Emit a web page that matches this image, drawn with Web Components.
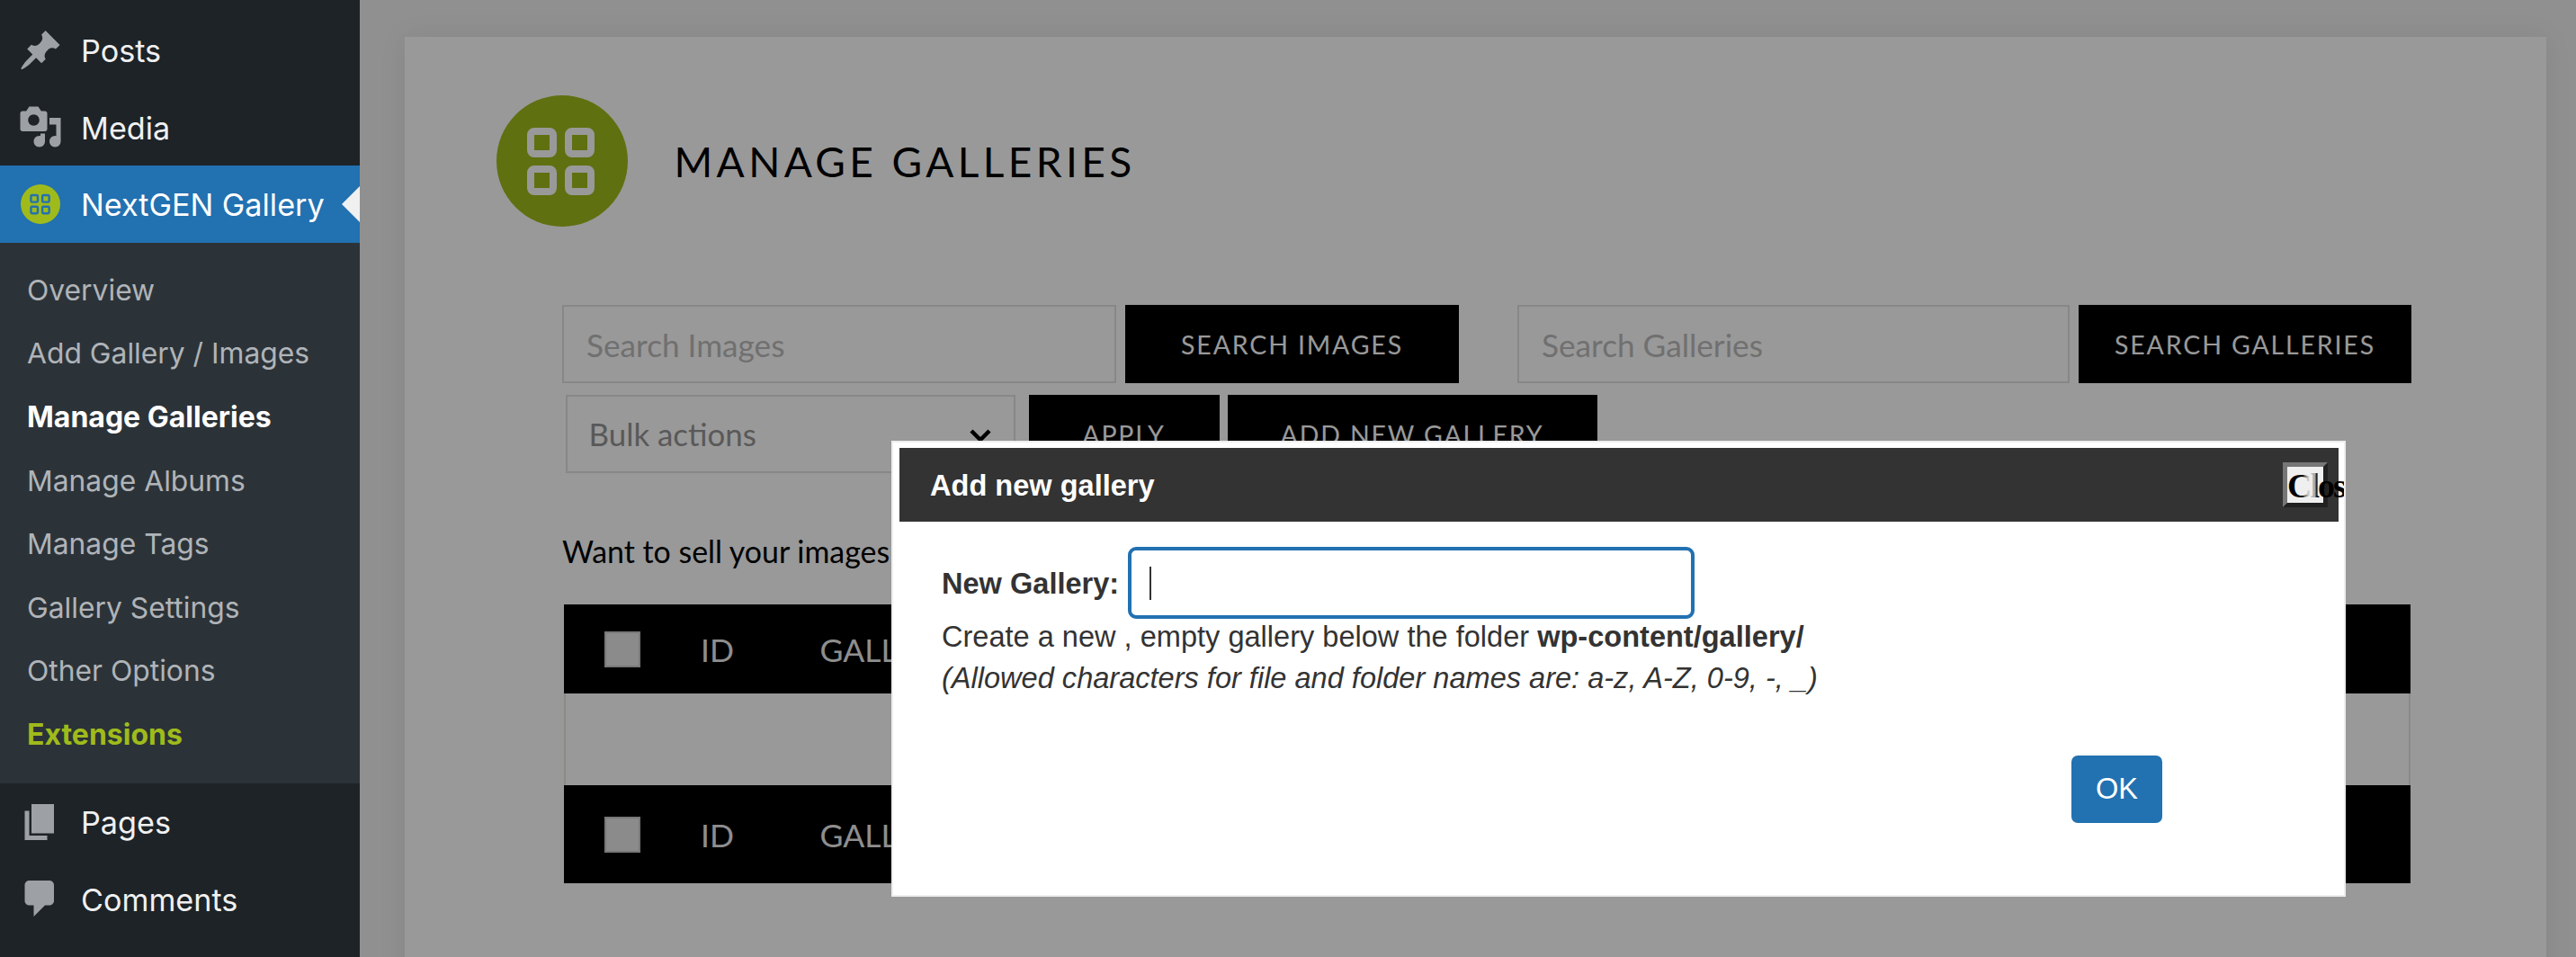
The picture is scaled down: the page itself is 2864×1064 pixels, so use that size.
<!DOCTYPE html>
<html lang="en"><head><meta charset="utf-8"><title>Manage Galleries</title>
<style>html,body{margin:0;padding:0;height:1064px;overflow:hidden;background:#f0f0f1}</style></head>
<body>
<wp-shell>
  <wp-sidebar slot="side">
    <wp-menu-item label="Posts" icon="post"></wp-menu-item>
    <wp-menu-item label="Media" icon="media"></wp-menu-item>
    <wp-menu-item label="NextGEN Gallery" icon="ngg" active></wp-menu-item>
    <wp-submenu>
      <wp-sub-item>Overview</wp-sub-item>
      <wp-sub-item>Add Gallery / Images</wp-sub-item>
      <wp-sub-item kind="current">Manage Galleries</wp-sub-item>
      <wp-sub-item>Manage Albums</wp-sub-item>
      <wp-sub-item>Manage Tags</wp-sub-item>
      <wp-sub-item>Gallery Settings</wp-sub-item>
      <wp-sub-item>Other Options</wp-sub-item>
      <wp-sub-item kind="ext">Extensions</wp-sub-item>
    </wp-submenu>
    <wp-menu-item label="Pages" icon="page"></wp-menu-item>
    <wp-menu-item label="Comments" icon="comment"></wp-menu-item>
  </wp-sidebar>
  <manage-page slot="main"></manage-page>
  <add-gallery-dialog slot="main"></add-gallery-dialog>
</wp-shell>
<script>
const def=(n,html)=>{customElements.define(n,class extends HTMLElement{
  constructor(){super();this.attachShadow({mode:'open'}).innerHTML=html;}
});};

def('wp-shell',`<style>
:host{display:flex;width:2864px;height:1064px;overflow:hidden}
.s{display:block;flex:0 0 400px}
.m{display:block;flex:1;position:relative;overflow:hidden}
</style><div class="s"><slot name="side"></slot></div><div class="m"><slot name="main"></slot></div>`);

def('wp-sidebar',`<style>
:host{display:block;width:400px;height:1064px;background:#1d2327;padding-top:13px;box-sizing:border-box;font-family:Inter,"Liberation Sans",sans-serif}
</style><slot></slot>`);

const ICONS={
 post:'<path d="M10.44 3.02l1.82-1.82 6.36 6.35-1.83 1.82c-1.05-.68-2.48-.57-3.41.36l-.75.75c-.92.93-1.04 2.35-.35 3.41l-1.83 1.82-2.41-2.41-2.8 2.79c-.42.42-3.38 2.71-3.8 2.29s1.86-3.39 2.28-3.81l2.79-2.79L4.1 9.36l1.83-1.82c1.05.69 2.48.57 3.4-.36l.75-.75c.93-.92 1.05-2.35.36-3.41z"/>',
 media:'<path d="M13 11V4c0-.55-.45-1-1-1h-1.67L9 1H5L3.67 3H2c-.55 0-1 .45-1 1v7c0 .55.45 1 1 1h10c.55 0 1-.45 1-1zM7 4.5c1.38 0 2.5 1.12 2.5 2.5S8.38 9.5 7 9.5 4.5 8.38 4.5 7 5.62 4.5 7 4.5zM14 6h5v10.5c0 1.38-1.12 2.5-2.5 2.5S14 17.88 14 16.5s1.12-2.5 2.5-2.5c.17 0 .34.02.5.05V9h-3V6zm-4 8.05V13h2v3.5c0 1.38-1.12 2.5-2.5 2.5S7 17.88 7 16.5 8.12 14 9.5 14c.17 0 .34.02.5.05z"/>',
 page:'<path d="M6 15V2h10v13H6zm-1 1h8v2H3V5h2v11z"/>',
 comment:'<path d="M5 2h9c1.1 0 2 .9 2 2v7c0 1.1-.9 2-2 2h-2l-5 5v-5H5c-1.1 0-2-.9-2-2V4c0-1.1.9-2 2-2z"/>'
};

customElements.define('wp-menu-item',class extends HTMLElement{
  constructor(){super();this.attachShadow({mode:'open'});}
  connectedCallback(){
    const ic=this.getAttribute('icon'),a=this.hasAttribute('active');
    const glyph=ic==='ngg'
      ?`<ngg-logo size="44" bg="#9fbb1b" fg="#2271b1"></ngg-logo>`
      :`<svg width="50" height="50" viewBox="0 0 20 20" fill="#9da1a5">${ICONS[ic]}</svg>`;
    this.shadowRoot.innerHTML=`<style>
    :host{display:flex;align-items:center;height:${a?86:85.5}px;position:relative;color:${a?'#fff':'#f0f0f1'};background:${a?'#2271b1':'transparent'};font-size:34.2px;line-height:1}
    .i{flex:0 0 90px;display:flex;align-items:center;justify-content:center;padding-right:1px;box-sizing:border-box}
    .t{padding-top:3px}
    .a{position:absolute;right:0;top:23px;width:0;height:0;border:20px solid transparent;border-left:0;border-right-color:#f0f0f1}
    </style><span class="i">${glyph}</span><span class="t">${this.getAttribute('label')}</span>${a?'<span class="a"></span>':''}`;
  }
});

def('wp-submenu',`<style>:host{display:block;background:#2c3338;padding:18px 0;height:601px;box-sizing:border-box}</style><slot></slot>`);

customElements.define('wp-sub-item',class extends HTMLElement{
  constructor(){super();this.attachShadow({mode:'open'});}
  connectedCallback(){
    const k=this.getAttribute('kind');
    const c=k==='current'?'#fff':k==='ext'?'#9fbb1b':'#b0b4b8';
    this.shadowRoot.innerHTML=`<style>:host{display:flex;align-items:center;height:70.6px;box-sizing:border-box;padding:0 0 2px 30px;font-size:${k?32:31.8}px;color:${c};font-weight:${k?650:400}}</style><slot></slot>`;
  }
});

customElements.define('ngg-logo',class extends HTMLElement{
  constructor(){super();this.attachShadow({mode:'open'});}
  connectedCallback(){
    const s=this.getAttribute('size'),bg=this.getAttribute('bg'),fg=this.getAttribute('fg');
    const r=(x,y)=>`<rect x="${x}" y="${y}" width="25" height="25" rx="4" fill="none" stroke="${fg}" stroke-width="8"/>`;
    this.shadowRoot.innerHTML=`<style>:host{display:block;width:${s}px;height:${s}px;flex:none}svg{display:block}</style>
    <svg width="${s}" height="${s}" viewBox="0 0 146 146"><circle cx="73" cy="73" r="73" fill="${bg}"/>${r(38,40)}${r(80,40)}${r(38,82)}${r(80,82)}</svg>`;
  }
});

def('black-btn',`<style>
:host{display:flex;align-items:center;justify-content:center;background:#000;color:#fff;height:87px;font:400 28.5px Lato,sans-serif;letter-spacing:1.85px;box-sizing:border-box;white-space:nowrap;flex:none}
</style><slot></slot>`);

def('search-field',`<style>
:host{display:flex;align-items:center;height:87px;box-sizing:border-box;border:2px solid #e2e2e2;padding:0 25px;font:400 35.2px Lato,sans-serif;color:#bbb;background:#fff;flex:none}
</style><slot></slot>`);

def('bulk-select',`<style>
:host{display:flex;align-items:center;justify-content:space-between;height:87px;width:500px;box-sizing:border-box;border:2px solid #e2e2e2;padding:0 25px 0 24px;font:400 34.9px Lato,sans-serif;color:#959595;background:#fff;flex:none}
svg{display:block;margin-top:3px}
</style><slot></slot><svg width="24" height="15" viewBox="0 0 24 15"><path d="M2 2l10 10L22 2" fill="none" stroke="#000" stroke-width="4.5"/></svg>`);

def('table-bar',`<style>
:host{display:flex;align-items:center;background:#000;color:#ededed;font:400 35.5px Lato,sans-serif;padding-left:45px}
.c{width:40px;height:40px;box-sizing:border-box;background:#e8e8e8;border:2px solid #c8c8c8;flex:none;margin-right:67px}
.g{margin-left:95.5px;white-space:nowrap}
span.t{display:block;margin-top:2px}
</style><span class="c"></span><span class="t">ID</span><span class="t g">GALLERY TITLE</span>`);

def('manage-page',`<style>
:host{position:absolute;inset:0;display:block;background:#f0f0f1;padding:41px 33px 0 50px;box-sizing:border-box}
.panel{background:#fff;height:1100px;box-shadow:0 0 30px rgba(0,0,0,.07);overflow:hidden}
.head{display:flex;align-items:center;gap:51.5px;padding:65px 0 0 102px}
h1{margin:0;font:400 46px Lato,sans-serif;letter-spacing:4.4px;color:#000;white-space:nowrap}
.form{margin:87px 0 0 175px;width:2056px}
.row{display:flex}
.row2{margin:13px 0 0 3.5px}
.note{margin:67px 0 0;font:400 33.9px/40px Lato,sans-serif;color:#000;white-space:nowrap}
.note span{margin-left:8px}
.tbl{margin:39px 0 0 2px;width:2053px}
.empty{height:102px;box-sizing:border-box;border:solid #e8e8dc;border-width:0 2px}
.overlay{position:absolute;inset:0;background:rgba(0,0,0,.4)}
</style>
<div class="panel">
  <div class="head"><ngg-logo size="146" bg="#9fbb1b" fg="#fff"></ngg-logo><h1>MANAGE GALLERIES</h1></div>
  <div class="form">
    <div class="row">
      <search-field style="width:616px">Search Images</search-field>
      <black-btn style="width:371px;margin-left:10px">SEARCH IMAGES</black-btn>
      <search-field style="width:614px;margin-left:65px">Search Galleries</search-field>
      <black-btn style="width:370px;margin-left:10px">SEARCH GALLERIES</black-btn>
    </div>
    <div class="row row2">
      <bulk-select>Bulk actions</bulk-select>
      <black-btn style="width:212px;margin-left:15px">APPLY</black-btn>
      <black-btn style="width:411px;margin-left:9px">ADD NEW GALLERY</black-btn>
    </div>
    <p class="note">Want to sell your images <span>online?</span></p>
    <div class="tbl">
      <table-bar style="height:99px"></table-bar>
      <div class="empty"></div>
      <table-bar style="height:109px"></table-bar>
    </div>
  </div>
</div>
<div class="overlay"></div>`);

def('add-gallery-dialog',`<style>
:host{position:absolute;left:591px;top:490px;width:1617px;height:507px;box-sizing:border-box;border:2px solid #eee;background:#fff;padding:6px 6px 0 7px;overflow:hidden;display:block;font:400 32.55px "Liberation Sans",Arial,sans-serif;color:#333}
.bar{display:flex;align-items:center;height:82px;background:#333;color:#fff;font-weight:700;padding-left:34px;white-space:nowrap}
.bar span{padding-top:2px}
.close{position:absolute;left:1545px;top:22px;width:50px;height:50px;box-sizing:border-box;border:5px outset #767676;background:#efefef;font:700 38px "Liberation Serif",serif;letter-spacing:-2px;color:#000;padding:1px 0 0 0;line-height:40px;white-space:nowrap;overflow:visible}
.wash{position:absolute;left:18px;top:0;width:15px;height:40px;background:linear-gradient(90deg,rgba(239,239,239,.2),rgba(239,239,239,.85) 35%,rgba(239,239,239,.7) 85%,rgba(239,239,239,0))}
.body{padding:28px 0 0 47px}
.f{display:flex;align-items:center;gap:10px;height:80px;font-weight:700}
.f>span{padding-top:3px}
.in{width:630px;height:80px;box-sizing:border-box;border:4px solid #2271b1;border-radius:9px;display:flex;align-items:center;padding-left:19.5px;background:#fff}
.caret{width:2px;height:37px;background:#333}
p{margin:0;line-height:46px;white-space:nowrap}
.l1{margin-top:-3px}
.ok-row{display:flex;justify-content:flex-end;padding-right:196px;margin-top:63px}
.ok{width:101px;height:75px;background:#2271b1;color:#fff;border-radius:7px;display:flex;align-items:center;justify-content:center}
</style>
<div class="bar"><span>Add new gallery</span></div>
<div class="close">Close<span class="wash"></span></div>
<div class="body">
  <div class="f"><span>New Gallery:</span><div class="in"><span class="caret"></span></div></div>
  <p class="l1">Create a new , empty gallery below the folder <b>wp-content/gallery/</b></p>
  <p><i>(Allowed characters for file and folder names are: a-z, A-Z, 0-9, -, _)</i></p>
  <div class="ok-row"><div class="ok">OK</div></div>
</div>`);
</script>
</body></html>
